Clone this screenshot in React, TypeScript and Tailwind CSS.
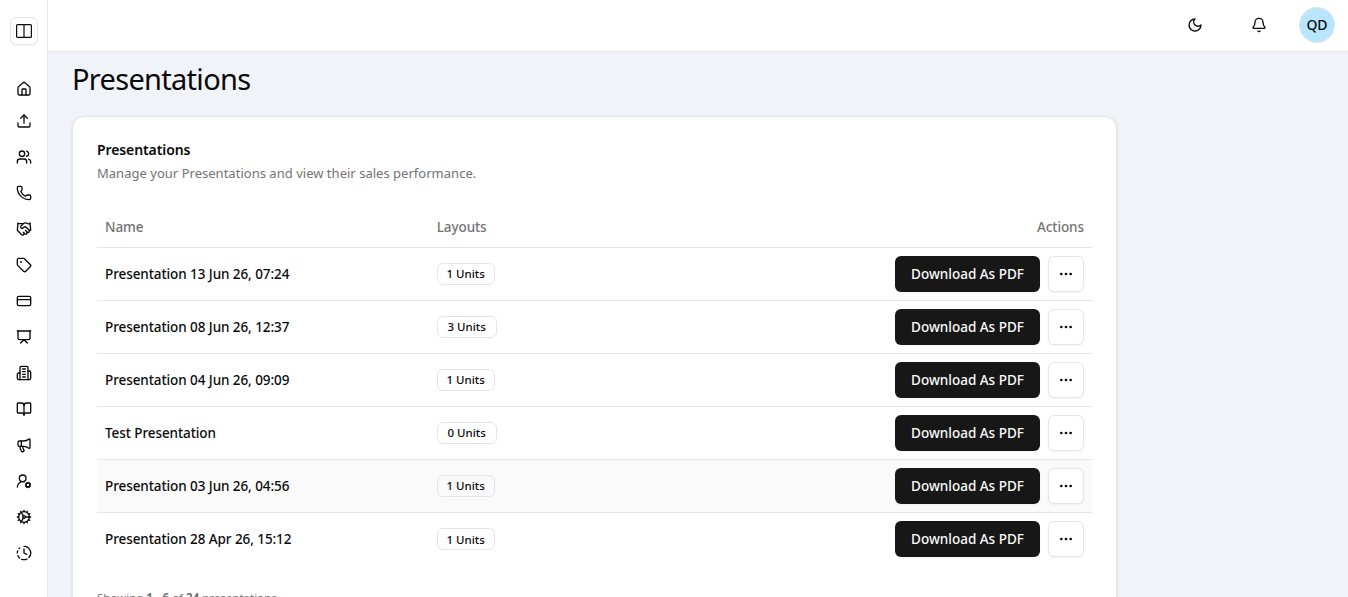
import {
  Bell,
  BookOpen,
  ClockFading,
  Cog,
  CreditCard,
  Ellipsis,
  Handshake,
  House,
  Megaphone,
  Phone,
  Presentation,
  Tag,
  Upload,
  Users,
  UserRoundCog,
} from "lucide-react"

function BuildingIcon({ size }: { size: number }) {
  return (
    <svg
      width={size}
      height={size}
      viewBox="0 0 24 24"
      fill="none"
      stroke="currentColor"
      strokeWidth="2"
      strokeLinecap="round"
      strokeLinejoin="round"
    >
      <path d="M6 22V4a2 2 0 0 1 2-2h8a2 2 0 0 1 2 2v18Z" />
      <path d="M6 12H4a2 2 0 0 0-2 2v6a2 2 0 0 0 2 2h2" />
      <path d="M18 9h2a2 2 0 0 1 2 2v9a2 2 0 0 1-2 2h-2" />
      <path d="M10 6h4M10 10h4M10 14h4M10 18h4" />
    </svg>
  )
}

const navItems = [
  Upload,
  Users,
  Phone,
  Handshake,
  Tag,
  CreditCard,
  Presentation,
  BuildingIcon,
  BookOpen,
  Megaphone,
  UserRoundCog,
  Cog,
  ClockFading,
]

const presentations = [
  { name: "Presentation 13 Jun 26, 07:24", units: 1 },
  { name: "Presentation 08 Jun 26, 12:37", units: 3 },
  { name: "Presentation 04 Jun 26, 09:09", units: 1 },
  { name: "Test Presentation", units: 0 },
  { name: "Presentation 03 Jun 26, 04:56", units: 1, active: true },
  { name: "Presentation 28 Apr 26, 15:12", units: 1 },
]

function Sidebar() {
  return (
    <aside className="flex w-12 shrink-0 flex-col items-center border-r border-[#e5e5e5] bg-white pt-[17px]">
      <button className="flex size-7 items-center justify-center rounded-md border border-[#e5e5e5] bg-white shadow-xs">
        <svg width="16" height="14" viewBox="0 0 16 14" fill="none" stroke="currentColor">
          <rect x="0.6" y="0.6" width="14.8" height="12.8" rx="1" strokeWidth="1.2" />
          <path d="M8 1v12" strokeWidth="1.2" />
        </svg>
      </button>
      <nav className="mt-7 flex flex-col items-center">
        <a className="flex h-8 w-8 items-center justify-center">
          <House size={16} />
        </a>
        <div className="flex flex-col gap-1">
          {navItems.map((Icon, i) => (
            <a key={i} className="flex size-8 items-center justify-center">
              <Icon size={16} />
            </a>
          ))}
        </div>
      </nav>
    </aside>
  )
}

function Header() {
  return (
    <header className="flex h-[52px] shrink-0 items-center justify-end border-b border-[#e5e5e5] bg-white pr-[13px] pb-px">
      <button className="mr-12 flex size-4 items-center justify-center">
        <svg
          width="16"
          height="16"
          viewBox="0 0 24 24"
          fill="none"
          stroke="currentColor"
          strokeWidth="2"
          strokeLinecap="round"
          strokeLinejoin="round"
        >
          <path d="M12 3a6 6 0 0 0 9 9 9 9 0 1 1-9-9Z" />
        </svg>
      </button>
      <button className="mr-8 flex size-4 items-center justify-center">
        <Bell size={16} />
      </button>
      <div className="flex size-9 items-center justify-center rounded-full border border-[#dfe5ea] bg-[#b8e6fe] text-sm font-medium">
        QD
      </div>
    </header>
  )
}

export default function App() {
  return (
    <div className="flex h-[597px] overflow-hidden bg-white font-['Noto_Sans','Open_Sans',sans-serif] text-[#0a0a0a]">
      <Sidebar />
      <div className="flex min-w-0 flex-1 flex-col">
        <Header />
        <main className="min-h-0 flex-1 overflow-hidden bg-[#f0f4f9] pl-6">
          <h1 className="pt-[9px] text-[29px] leading-9 tracking-[-0.7px]">Presentations</h1>

          <section className="mt-[19px] h-[600px] w-[1045px] rounded-xl border border-[#e5e5e5] bg-white px-6 pt-[25px] shadow-sm">
            <h2 className="text-sm leading-4 font-semibold tracking-[-0.1px]">Presentations</h2>
            <p className="mt-[5px] text-[13px] leading-5 tracking-[0.02px] text-[#737373]">
              Manage your Presentations and view their sales performance.
            </p>

            <table className="mt-6 w-full table-fixed text-[13.5px] font-medium tracking-[-0.08px]">
              <thead>
                <tr className="h-10 border-b border-[#e5e5e5] text-[#737373]">
                  <th className="w-1/3 px-2 text-left font-medium">Name</th>
                  <th className="w-1/3 px-2 text-left font-medium">Layouts</th>
                  <th className="w-1/3 px-2 text-right font-medium">Actions</th>
                </tr>
              </thead>
              <tbody>
                {presentations.map((item) => (
                  <tr
                    key={item.name}
                    className={
                      item.active
                        ? "h-[53px] border-b border-[#e5e5e5] bg-[#fafafa]"
                        : "h-[53px] border-b border-[#e5e5e5] last:border-0"
                    }
                  >
                    <td className="px-2 pt-px">{item.name}</td>
                    <td className="px-2">
                      <span
                        className={
                          item.units === 1
                            ? "inline-flex h-[22px] w-[58px] items-center justify-center rounded-md border border-[#e5e5e5] pt-px text-[11.5px] tracking-normal"
                            : "inline-flex h-[22px] w-[60px] items-center justify-center rounded-md border border-[#e5e5e5] pt-px text-[11.5px] tracking-normal"
                        }
                      >
                        {item.units} Units
                      </span>
                    </td>
                    <td className="px-2">
                      <div className="flex justify-end gap-2">
                        <button className="flex h-9 w-[145px] items-center justify-center rounded-md bg-[#171717] pt-px tracking-normal text-[#fafafa] shadow-xs">
                          Download As PDF
                        </button>
                        <button className="flex size-9 items-center justify-center rounded-md border border-[#e5e5e5] bg-white shadow-xs">
                          <Ellipsis size={16} />
                        </button>
                      </div>
                    </td>
                  </tr>
                ))}
              </tbody>
            </table>

            <p className="mt-[25px] text-[11.5px] leading-4 text-[#737373]">
              Showing <strong>1 - 6</strong> of <strong>24</strong> presentations
            </p>
          </section>
        </main>
      </div>
    </div>
  )
}
